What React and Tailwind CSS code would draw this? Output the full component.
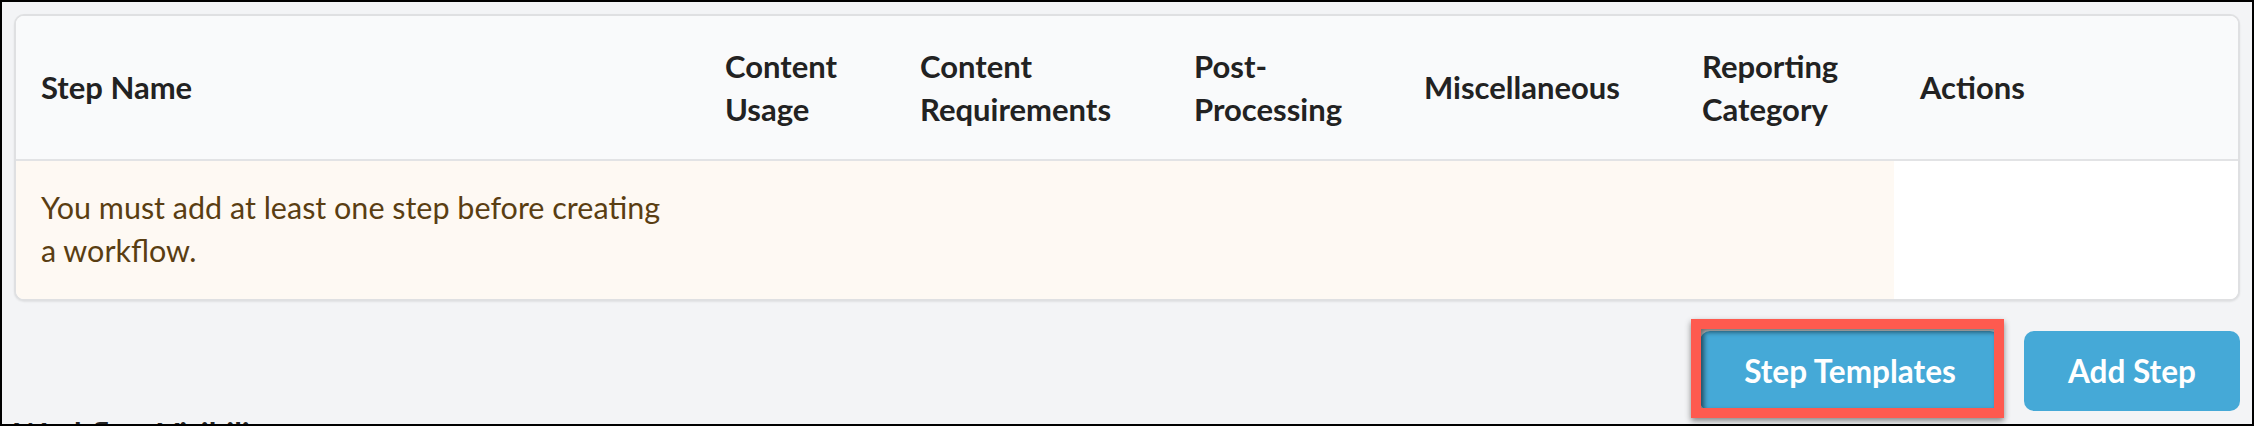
import React from "react";

const columns = [
  { label: "Step Name", width: "w-[683px]", pad: "pl-[25px]" },
  { label: "Content Usage", width: "w-[195px]", pad: "pl-[26px]" },
  { label: "Content Requirements", width: "w-[274px]", pad: "pl-[26px]" },
  { label: "Post-Processing", width: "w-[230px]", pad: "pl-[26px]" },
  { label: "Miscellaneous", width: "w-[278px]", pad: "pl-[26px]" },
  { label: "Reporting Category", width: "w-[218px]", pad: "pl-[26px]" },
  { label: "Actions", width: "w-[344px]", pad: "pl-[26px]" },
];

// Workflow steps table with empty-state warning
const StepsTable = () => {
  return (
    <div className="rounded-[10px] border-2 border-[#dfe0e2] bg-white overflow-hidden shadow-[0_1px_2px_rgba(0,0,0,0.08)]">
      <table className="w-full table-fixed border-collapse">
        <colgroup>
          {columns.map((c) => (
            <col key={c.label} className={c.width} />
          ))}
        </colgroup>
        <thead>
          <tr className="bg-[#f9fafb] border-b-2 border-[#e2e3e5]">
            {columns.map((c) => (
              <th
                key={c.label}
                className={`${c.pad} pr-[20px] h-[144px] text-left align-middle font-bold text-[31px] leading-[43px] text-[#222222]`}
              >
                {c.label}
              </th>
            ))}
          </tr>
        </thead>
        <tbody>
          <tr>
            <td className="bg-[#fef9f3] pl-[25px] pr-[26px] pt-[25px] pb-[27px] text-[30.5px] leading-[43px] text-[#5a3e12] align-top">
              <div className="max-w-[628px]">
                You must add at least one step before creating a workflow.
              </div>
            </td>
            <td className="bg-[#fef9f3]"></td>
            <td className="bg-[#fef9f3]"></td>
            <td className="bg-[#fef9f3]"></td>
            <td className="bg-[#fef9f3]"></td>
            <td className="bg-[#fef9f3]"></td>
            <td className="bg-white"></td>
          </tr>
        </tbody>
      </table>
    </div>
  );
};

export default function App() {
  return (
    <div
      className="w-[2254px] h-[426px] overflow-hidden border-2 border-black bg-[#f3f4f6] px-[12px] pt-[12px]"
      style={{ fontFamily: "Lato, 'Open Sans', sans-serif" }}
    >
      <StepsTable />

      {/* Buttons */}
      <div className="flex justify-end gap-[24px] mt-[30px]">
        <div className="relative">
          <button className="h-[80px] w-[300px] rounded-[10px] bg-[#45a9d7] text-white font-bold text-[31.5px] leading-[43px]">
            Step Templates
          </button>
          {/* annotation frame */}
          <div className="absolute left-[-9px] top-[-12px] w-[313px] h-[99px] border-[10px] border-[#fe5a4f] shadow-[0_3px_6px_rgba(0,0,0,0.45),inset_3px_3px_5px_rgba(0,0,0,0.55)] pointer-events-none"></div>
        </div>
        <button className="h-[80px] w-[216px] rounded-[10px] bg-[#45a9d7] text-white font-bold text-[31.5px] leading-[43px]">
          Add Step
        </button>
      </div>

      <h3 className="mt-[7px] text-[31px] leading-none font-bold text-[#222222]">
        Workflow Visibility
      </h3>
    </div>
  );
}
